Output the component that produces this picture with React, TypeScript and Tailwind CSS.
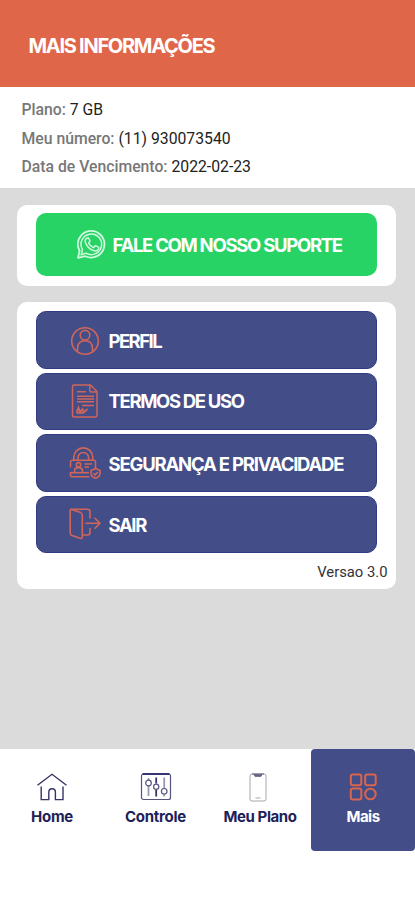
import type { ReactNode } from "react";

function WhatsappIcon() {
  return (
    <svg className="w-[31px] h-[31px]" viewBox="0 0 31 31" fill="none" stroke="#d0fadd">
      <path d="M2 28.8L3.6 21.8A13.3 13.3 0 1 1 9.4 27.2Z" strokeWidth="1.8" strokeLinejoin="round" />
      <path d="M5.2 25.8L6.5 20.6A10.3 10.3 0 1 1 10 24.1Z" strokeWidth="1.5" strokeLinejoin="round" />
      <path
        d="M11.3 9C9.2 9.9 8.5 12.1 9.7 14.3C11.7 18.3 14.4 20.7 18.1 21.8C20.6 22.4 22.7 21.1 22.9 18.8C22.8 18.1 20 16.6 19.3 16.8L17.5 18.6C15.2 17.6 13.6 16.1 12.6 14.1L13.9 12.3C14 11.7 12.9 9.3 12.3 9Z"
        strokeWidth="1.5"
        strokeLinejoin="round"
      />
    </svg>
  );
}

function ProfileIcon() {
  return (
    <svg className="w-8 h-8 mt-0.5" viewBox="0 0 32 32" fill="none" stroke="#d0655a" strokeWidth="1.6">
      <circle cx="16" cy="16" r="13.3" />
      <circle cx="16" cy="10.2" r="4.8" />
      <path d="M8.5 26.5V23.5C8.5 18.5 11.5 15.8 16 15.8S23.5 18.5 23.5 23.5V26.5" />
    </svg>
  );
}

function TermsIcon() {
  return (
    <svg className="w-8 h-9" viewBox="0 0 32 36" fill="none" stroke="#d0655a" strokeWidth="1.5">
      <path d="M5 2H21.5L28 8.5V32.5A1.5 1.5 0 0 1 26.5 34H5A1.5 1.5 0 0 1 3.5 32.5V3.5A1.5 1.5 0 0 1 5 2Z" />
      <path d="M20.8 2V7.5A1.5 1.5 0 0 0 22.3 9H28" />
      <path d="M8 8.8H17M8 13.3H25M8 16H25M8 18.7H25M13 22.5H25" />
      <path d="M7.5 29.5L9.5 24.5L11 29L13.5 26L14.8 29.5L18.5 26M7.5 29.8H14" strokeWidth="1.8" />
    </svg>
  );
}

function LockIcon() {
  return (
    <svg className="w-8 h-8" viewBox="0 0 32 32" fill="none" stroke="#d0655a" strokeWidth="1.6">
      <path d="M4.8 13.3V10.4A9.5 9.5 0 0 1 23.8 10.4V13.3M9 13.3V10.8A5.3 5.3 0 0 1 19.6 10.8V13.3" />
      <path d="M20.5 29.8H3A1.6 1.6 0 0 1 1.5 28.2V25M1.5 20.5V14.8A1.6 1.6 0 0 1 3 13.3H25A1.6 1.6 0 0 1 26.5 14.8V21" />
      <path d="M1.5 25.7H20" />
      <circle cx="9.5" cy="17.8" r="2.2" />
      <path d="M5.6 25.5V23.5C5.6 21.6 7.2 20.6 9.5 20.6S13.4 21.6 13.4 23.5V25.5M15.5 17H23M15.5 20H20" />
      <path d="M26.5 21.5L31 23.5V26.3C31 29 29 30.6 26.5 31.3C24 30.6 22 29 22 26.3V23.5Z" />
      <path d="M24.4 26.3L26 28L28.8 25" />
    </svg>
  );
}

function ExitIcon() {
  return (
    <svg className="w-8 h-8" viewBox="0 0 32 32" fill="none" stroke="#d0655a" strokeWidth="1.6" strokeLinejoin="round">
      <path d="M2 1.2H18.5Q21 1.2 21 3.5V10.5M21 20V24.5Q21 27 18.5 27H13.5" />
      <path d="M2 1.2L11 4.3Q13.3 5.2 13.3 7V29Q13.3 31 11 30.3L3 27.5Q1.2 26.7 1.2 25V2.2Q1.2 1.2 2 1.2Z" />
      <path d="M17 15.2H30.5M26 10.2L31 15.2L26 20.2" strokeLinecap="round" />
    </svg>
  );
}

function HomeIcon() {
  return (
    <svg className="w-8 h-7" viewBox="0 0 32 28" fill="none" stroke="#353466" strokeWidth="1.4">
      <path d="M1.5 12.3L16 1.3L30.5 12.3" />
      <path d="M5.2 13.5V26.6H12.8V19A3.3 3.3 0 0 1 19.4 19V26.6H27V13.5" />
    </svg>
  );
}

function ControlIcon() {
  return (
    <svg className="w-8 h-7" viewBox="0 0 32 28" fill="none" stroke="#55547f" strokeWidth="1.2">
      <rect x="1.5" y="1" width="29" height="25.5" rx="2" />
      <path d="M2.5 1H29.5" stroke="#29286b" strokeWidth="1.8" />
      <path d="M8.5 5V7M8.5 13V23" strokeWidth="1.8" stroke="#9a99b0" />
      <path d="M16.2 4.5V10.5M16.2 17V23.5" strokeWidth="1.8" stroke="#353466" />
      <path d="M24.2 4.5V15.5M24.2 21.5V23.5" strokeWidth="1.8" stroke="#9a99b0" />
      <circle cx="8.5" cy="10" r="2.8" />
      <circle cx="16.2" cy="13.8" r="2.6" />
      <circle cx="24.2" cy="18.3" r="2.8" />
    </svg>
  );
}

function PhoneIcon() {
  return (
    <svg className="w-8 h-[29px] mr-1" viewBox="0 0 32 29" fill="none" stroke="#a5a5af">
      <rect x="8" y="1" width="16" height="27" rx="2" />
      <path d="M10 1H22" stroke="#63627d" />
      <path d="M12 1.2L13 3.3H19L20 1.2" fill="#63627d" stroke="#63627d" />
      <path d="M13.5 25H18.5" />
    </svg>
  );
}

function MoreIcon() {
  return (
    <svg className="w-7 h-7" viewBox="0 0 28 28" fill="none" stroke="#d9654f" strokeWidth="2">
      <rect x="1.8" y="1.4" width="10.5" height="10.8" rx="2" />
      <rect x="16.2" y="1.4" width="10.5" height="10.8" rx="2" />
      <rect x="1.8" y="15.6" width="10.5" height="10.8" rx="2" />
      <circle cx="21.4" cy="21" r="5.3" />
    </svg>
  );
}

const info = [
  { label: "Plano:", value: "7 GB" },
  { label: "Meu número:", value: "(11) 930073540" },
  { label: "Data de Vencimento:", value: "2022-02-23" },
];

const menu = [
  { label: "PERFIL", icon: <ProfileIcon />, text: "pt-[5px] tracking-[-1.55px]" },
  { label: "TERMOS DE USO", icon: <TermsIcon />, text: "pt-px tracking-[-1.35px]" },
  { label: "SEGURANÇA E PRIVACIDADE", icon: <LockIcon />, text: "pt-[5px] tracking-[-1.2px]" },
  { label: "SAIR", icon: <ExitIcon />, text: "pt-[3px] tracking-[-1.4px]" },
];

function NavItem({ label, icon, className }: { label: string; icon: ReactNode; className: string }) {
  return (
    <button className={`h-[102px] flex flex-col items-center pt-6 text-[15px] leading-5 font-bold whitespace-nowrap ${className}`}>
      <span className="h-[34px] flex items-start">{icon}</span>
      {label}
    </button>
  );
}

export default function App() {
  return (
    <div className="w-full h-[900px] flex flex-col bg-[#dbdbdb] overflow-hidden font-['Inter',sans-serif]">
      <header className="h-[87px] shrink-0 bg-[#df6649] pl-[28.5px] pt-[32px]">
        <h1 className="text-[20px] leading-7 font-bold tracking-[-1.28px] text-white">MAIS INFORMAÇÕES</h1>
      </header>

      <section className="h-[101px] shrink-0 bg-white pl-[21.5px] pt-[9px] font-['Roboto',sans-serif] text-[15.75px]">
        {info.map((row) => (
          <p key={row.label} className="h-[28.6px] leading-[28.6px] text-[#222222]">
            <span className="font-medium text-[#777777]">{row.label}</span> {row.value}
          </p>
        ))}
      </section>

      <main className="flex-1 pt-[17px] pl-[17px] pr-[19.5px]">
        <div className="h-[81px] rounded-[10px] bg-white pt-[8px] px-[18.5px]">
          <button className="w-full h-[63px] flex items-center rounded-[10px] bg-[#28d366] pl-[40px] gap-[6px] text-[18.5px] font-bold tracking-[-1.28px] text-white whitespace-nowrap">
            <WhatsappIcon />
            <span className="pt-[2px]">FALE COM NOSSO SUPORTE</span>
          </button>
        </div>

        <div className="mt-4 h-[287px] rounded-[10px] bg-white pt-[9px] px-[18.5px]">
          <div className="flex flex-col gap-1">
            {menu.map((item) => (
              <button
                key={item.label}
                className="w-full h-[57.5px] flex items-center gap-[8px] rounded-[10px] border border-[#313b80] bg-[#434d88] pl-8 text-[18.5px] font-bold text-white whitespace-nowrap"
              >
                {item.icon}
                <span className={item.text}>{item.label}</span>
              </button>
            ))}
          </div>
          <p className="mt-[9px] -mr-[10.5px] text-right text-[14.8px] leading-5 text-[#333333] font-['Roboto',sans-serif]">Versao 3.0</p>
        </div>
      </main>

      <nav className="h-[151px] shrink-0 flex bg-white text-[#211f59]">
        <NavItem label="Home" icon={<HomeIcon />} className="w-[104px] tracking-[-0.3px]" />
        <NavItem label="Controle" icon={<ControlIcon />} className="w-[103px] tracking-[-0.25px]" />
        <NavItem label="Meu Plano" icon={<PhoneIcon />} className="w-[104px] pl-[2px] tracking-[-0.4px]" />
        <NavItem label="Mais" icon={<MoreIcon />} className="w-[104px] rounded-[4px] bg-[#434d88] text-white tracking-[-0.5px]" />
      </nav>
    </div>
  );
}
